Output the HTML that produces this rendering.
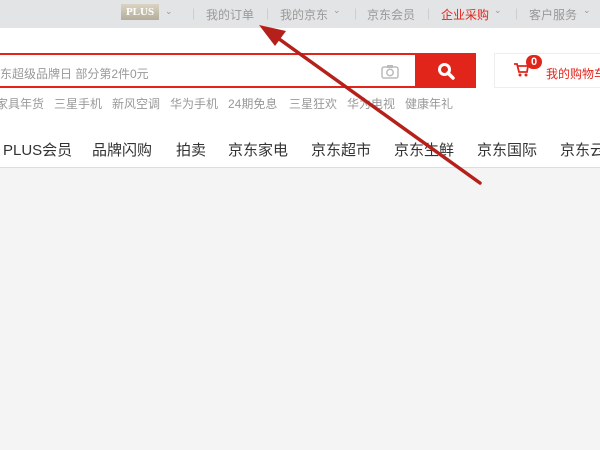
<!DOCTYPE html>
<html><head><meta charset="utf-8"><style>
*{margin:0;padding:0;box-sizing:border-box}
body{width:600px;height:450px;overflow:hidden;background:#f4f4f4;font-family:"Liberation Sans","Noto Sans CJK SC",sans-serif;position:relative}
.a{position:absolute;white-space:nowrap}
.top{position:absolute;left:0;top:0;width:600px;height:28px;background:#e3e4e5;font-size:12px;color:#999}
.main{position:absolute;left:0;top:28px;width:600px;height:140px;background:#fff;border-bottom:1px solid #ddd}
.sep{color:#ccc}
.hw{font-size:12px;color:#999;top:95px}
.nv{font-size:15px;color:#333;top:139px}
</style></head><body>
<div class="top">
<div class="a" style="left:121px;top:4px;width:38px;height:16px;background:linear-gradient(#d9d3c2,#b3ad9c);color:#fff;font:bold 11px 'Liberation Serif',serif;text-align:center;line-height:16px">PLUS</div>
<div class="a" style="left:165px;top:6px;font-size:9px">⌄</div>
<div class="a sep" style="left:192px;top:6px">|</div>
<div class="a" style="left:206px;top:6px">我的订单</div>
<div class="a sep" style="left:266px;top:6px">|</div>
<div class="a" style="left:280px;top:6px">我的京东</div>
<div class="a" style="left:333px;top:5px;font-size:9px">⌄</div>
<div class="a sep" style="left:354px;top:6px">|</div>
<div class="a" style="left:367px;top:6px">京东会员</div>
<div class="a sep" style="left:427px;top:6px">|</div>
<div class="a" style="left:441px;top:6px;color:#e1251b">企业采购</div>
<div class="a" style="left:494px;top:5px;font-size:9px">⌄</div>
<div class="a sep" style="left:515px;top:6px">|</div>
<div class="a" style="left:529px;top:6px">客户服务</div>
<div class="a" style="left:583px;top:5px;font-size:9px">⌄</div>
</div>
<div class="main"></div>
<div class="a" style="left:-4px;top:53px;width:421px;height:35px;border:2px solid #e1251b;background:#fff"></div>
<div class="a" style="left:0;top:65px;font-size:12px;color:#999">东超级品牌日 部分第2件0元</div>
<svg class="a" style="left:381px;top:64px" width="18" height="15" viewBox="0 0 18 15"><rect x="1" y="3" width="16" height="11" rx="2" fill="none" stroke="#bbb" stroke-width="1.5"/><rect x="6" y="1" width="6" height="3" fill="#bbb"/><circle cx="9" cy="8.5" r="3.2" fill="none" stroke="#bbb" stroke-width="1.5"/></svg>
<div class="a" style="left:417px;top:53px;width:59px;height:35px;background:#e1251b"></div>
<svg class="a" style="left:437px;top:62px" width="18" height="18" viewBox="0 0 18 18"><circle cx="7.5" cy="7.5" r="5" fill="none" stroke="#fff" stroke-width="3"/><path d="M11 11l5 5" stroke="#fff" stroke-width="3.5" stroke-linecap="round"/></svg>
<div class="a" style="left:494px;top:53px;width:120px;height:35px;border:1px solid #eee;background:#fff"></div>
<svg class="a" style="left:513px;top:62px" width="16" height="16" viewBox="0 0 16 16"><path d="M1 2h3l2 8h8l1-6H5" fill="none" stroke="#e1251b" stroke-width="1.8"/><circle cx="7" cy="13" r="1.5" fill="#e1251b"/><circle cx="13" cy="13" r="1.5" fill="#e1251b"/></svg>
<div class="a" style="left:526px;top:55px;width:16px;height:14px;border-radius:7px;background:#e1251b;color:#fff;font-size:11px;font-weight:bold;text-align:center;line-height:14px">0</div>
<div class="a" style="left:546px;top:65px;font-size:12px;color:#e1251b">我的购物车</div>
<div class="a hw" style="left:-4px">家具年货</div>
<div class="a hw" style="left:54px">三星手机</div>
<div class="a hw" style="left:112px">新风空调</div>
<div class="a hw" style="left:170px">华为手机</div>
<div class="a hw" style="left:228px">24期免息</div>
<div class="a hw" style="left:289px">三星狂欢</div>
<div class="a hw" style="left:347px">华为电视</div>
<div class="a hw" style="left:405px">健康年礼</div>
<div class="a nv" style="left:3px">PLUS会员</div>
<div class="a nv" style="left:92px">品牌闪购</div>
<div class="a nv" style="left:176px">拍卖</div>
<div class="a nv" style="left:228px">京东家电</div>
<div class="a nv" style="left:311px">京东超市</div>
<div class="a nv" style="left:394px">京东生鲜</div>
<div class="a nv" style="left:477px">京东国际</div>
<div class="a nv" style="left:560px">京东云</div>
<svg class="a" style="left:0;top:0" width="600" height="450"><path d="M480 183L268 31" stroke="#b5201a" stroke-width="3.5" stroke-linecap="round"/><path d="M259 25L286 31L275 46Z" fill="#b5201a"/></svg>
</body></html>
